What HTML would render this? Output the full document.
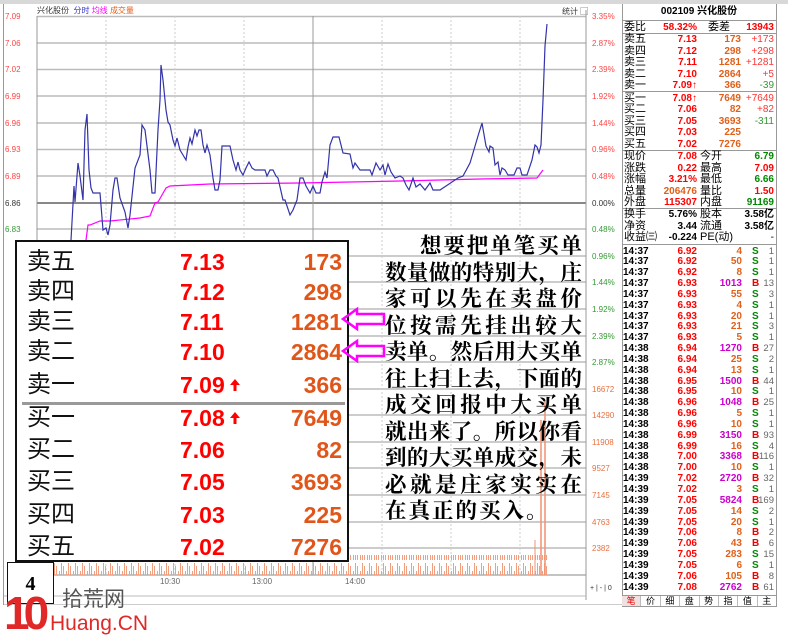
<!DOCTYPE html>
<html><head><meta charset="utf-8"><style>
*{margin:0;padding:0;box-sizing:border-box}
body{width:788px;height:641px;background:#fff;position:relative;overflow:hidden;font-family:"Liberation Sans","Noto Sans CJK SC",sans-serif}
.a{position:absolute}
.ax{position:absolute;font-size:8px;line-height:9px}
.r{position:absolute;left:622px;width:154px;height:11px;font-size:10px;line-height:11px;font-weight:bold}
.r span{position:absolute}
.l{left:2px;font-weight:normal;font-size:11px;line-height:11px;color:#000}
.p{right:79px;color:#f00}
.v{right:35px;color:#e0601a}
.c{right:2px;font-weight:normal;color:#f33}
.t{left:1px;color:#000}
.tp{right:79px;color:#f00}
.tv{right:34px;color:#e0601a}
.tb{left:130px}
.tn{right:2px;color:#666;font-weight:normal;font-size:9.5px}
.m{color:#c0c!important}
.B{color:#e00}.S{color:#080}
.bx{position:absolute;left:27px;width:320px;height:30px;font-size:24px;line-height:30px}
.bx span{position:absolute}
.bl{left:0;color:#111;font-family:"Liberation Sans","WenQuanYi Zen Hei",sans-serif}
.bp{left:153px;color:#f00;font-weight:bold;font-size:23px}
.bv{right:5px;color:#e0561a;font-weight:bold;font-size:23px}
.tx{position:absolute;left:385px;width:197px;font-family:"Liberation Serif","Noto Serif CJK SC",serif;font-weight:bold;font-size:21.5px;line-height:26.5px;text-align:justify;text-align-last:justify;white-space:nowrap;color:#000}
</style></head><body>
<div class="a" style="left:0;top:0;width:788px;height:4px;background:#d8d8d8"></div>
<div class="a" style="left:3px;top:4px;width:1px;height:601px;background:#999"></div>
<div class="a" style="left:37px;top:5px;font-size:8px;color:#333">兴化股份 <span style="color:#33c">&nbsp;分时</span> <span style="color:#f0f">均线</span> <span style="color:#e06020">成交量</span></div>
<div class="a" style="left:562px;top:6px;font-size:8px;color:#333">统计 ▢</div>

<svg class="a" style="left:0;top:0" width="622" height="605">
<g stroke="#bbb" stroke-width="1.4">
<line x1="37" y1="16.5" x2="586" y2="16.5"/><line x1="37" y1="43" x2="586" y2="43"/><line x1="37" y1="69.5" x2="586" y2="69.5"/><line x1="37" y1="96" x2="586" y2="96"/><line x1="37" y1="123" x2="586" y2="123"/><line x1="37" y1="149.5" x2="586" y2="149.5"/><line x1="37" y1="176" x2="586" y2="176"/>
<line x1="37" y1="229" x2="586" y2="229"/><line x1="37" y1="256" x2="586" y2="256"/><line x1="37" y1="282" x2="586" y2="282"/><line x1="37" y1="309" x2="586" y2="309"/><line x1="37" y1="336" x2="586" y2="336"/><line x1="37" y1="362" x2="586" y2="362"/><line x1="37" y1="389" x2="586" y2="389"/><line x1="37" y1="415" x2="586" y2="415"/><line x1="37" y1="442" x2="586" y2="442"/><line x1="37" y1="468" x2="586" y2="468"/><line x1="37" y1="495" x2="586" y2="495"/><line x1="37" y1="522" x2="586" y2="522"/><line x1="37" y1="548" x2="586" y2="548"/>
</g>
<line x1="37" y1="203" x2="586" y2="203" stroke="#888" stroke-width="2"/>
<line x1="37" y1="575" x2="586" y2="575" stroke="#888" stroke-width="1"/>
<g stroke="#ccc" stroke-dasharray="2,2"><line x1="106" y1="16" x2="106" y2="575"/><line x1="175" y1="16" x2="175" y2="575"/><line x1="244" y1="16" x2="244" y2="575"/><line x1="382" y1="16" x2="382" y2="575"/><line x1="451" y1="16" x2="451" y2="575"/><line x1="520" y1="16" x2="520" y2="575"/></g>
<line x1="313" y1="16" x2="313" y2="575" stroke="#999"/>
<line x1="37" y1="16" x2="37" y2="600" stroke="#999"/>
<line x1="586" y1="10" x2="586" y2="600" stroke="#999"/>
<rect x="37" y="555" width="510" height="20" fill="url(#vb)"/>
<defs><pattern id="vb" width="7" height="20" patternUnits="userSpaceOnUse"><rect x="0" y="6" width="1" height="14" fill="#f0a080"/><rect x="3" y="11" width="1" height="9" fill="#f0a080"/><rect x="5" y="3" width="1" height="17" fill="#f0a080"/></pattern></defs>
<line x1="541" y1="420" x2="541" y2="575" stroke="#f09070" stroke-width="1.5"/><line x1="545" y1="400" x2="545" y2="575" stroke="#f09070" stroke-width="1.5"/><line x1="535" y1="540" x2="535" y2="575" stroke="#f09070"/>
<polyline fill="none" stroke="#f0f" stroke-width="1.2" points="86,240 88,225 90,225 100,221 110,221 140,218 150,216 155,203 158,202 162,195 166,188 170,186 210,184 300,183 400,181 480,179 537,178 543,170"/>
<polyline fill="none" stroke="#33a" stroke-width="1.2" points="71,240 74,186 75,202 78,163 80,176 83,200 85,130 87,114 89,170 91,188 93,193 100,193 103,230 106,228 108,235 110,225 113,190 115,178 117,178 120,198 125,212 128,228 130,215 135,168 140,155 142,125 145,130 150,170 152,193 155,193 158,130 160,100 161,65 163,80 166,110 168,122 170,125 173,140 175,146 177,138 180,150 183,155 186,160 188,147 190,138 192,144 195,130 197,136 199,130 201,130 203,145 205,153 207,145 210,155 213,178 215,190 218,190 220,180 222,146 230,146 233,160 236,170 238,162 240,170 243,175 246,168 249,162 252,168 255,170 265,170 267,176 270,170 273,170 276,176 278,178 283,200 285,200 290,215 293,210 297,200 300,178 303,178 306,186 310,193 313,186 316,193 320,193 322,182 325,172 327,178 330,145 333,137 339,137 343,153 350,154 353,168 355,163 360,170 370,170 372,175 376,163 380,170 383,165 385,175 388,164 391,172 395,178 400,176 403,178 406,185 409,190 413,178 416,187 420,184 425,190 430,183 433,190 440,190 458,178 463,176 470,163 478,136 482,123 486,146 489,152 490,146 493,148 495,165 498,162 500,175 502,168 505,170 508,175 514,175 517,168 520,168 522,175 527,175 532,160 535,145 537,147 539,153 541,145 543,100 545,46 547,24"/>
<line x1="4" y1="596" x2="586" y2="596" stroke="#bbb"/>
<line x1="4" y1="605" x2="622" y2="605" stroke="#999"/>
</svg>

<div class="ax" style="left:5px;top:12px;color:#f44">7.09</div>
<div class="ax" style="left:5px;top:39px;color:#f44">7.06</div>
<div class="ax" style="left:5px;top:65px;color:#f44">7.02</div>
<div class="ax" style="left:5px;top:92px;color:#f44">6.99</div>
<div class="ax" style="left:5px;top:119px;color:#f44">6.96</div>
<div class="ax" style="left:5px;top:145px;color:#f44">6.93</div>
<div class="ax" style="left:5px;top:172px;color:#f44">6.89</div>
<div class="ax" style="left:5px;top:199px;color:#333">6.86</div>
<div class="ax" style="left:5px;top:225px;color:#393">6.83</div>

<div class="ax" style="left:592px;top:12px;color:#f44">3.35%</div>
<div class="ax" style="left:592px;top:39px;color:#f44">2.87%</div>
<div class="ax" style="left:592px;top:65px;color:#f44">2.39%</div>
<div class="ax" style="left:592px;top:92px;color:#f44">1.92%</div>
<div class="ax" style="left:592px;top:119px;color:#f44">1.44%</div>
<div class="ax" style="left:592px;top:145px;color:#f44">0.96%</div>
<div class="ax" style="left:592px;top:172px;color:#f44">0.48%</div>
<div class="ax" style="left:592px;top:199px;color:#333">0.00%</div>
<div class="ax" style="left:592px;top:225px;color:#393">0.48%</div>
<div class="ax" style="left:592px;top:252px;color:#393">0.96%</div>
<div class="ax" style="left:592px;top:278px;color:#393">1.44%</div>
<div class="ax" style="left:592px;top:305px;color:#393">1.92%</div>
<div class="ax" style="left:592px;top:332px;color:#393">2.39%</div>
<div class="ax" style="left:592px;top:358px;color:#393">2.87%</div>
<div class="ax" style="left:592px;top:385px;color:#e87040">16672</div>
<div class="ax" style="left:592px;top:411px;color:#e87040">14290</div>
<div class="ax" style="left:592px;top:438px;color:#e87040">11908</div>
<div class="ax" style="left:592px;top:464px;color:#e87040">9527</div>
<div class="ax" style="left:592px;top:491px;color:#e87040">7145</div>
<div class="ax" style="left:592px;top:518px;color:#e87040">4763</div>
<div class="ax" style="left:592px;top:544px;color:#e87040">2382</div>
<div class="ax" style="left:590px;top:584px;color:#333;font-size:7px">+ | - | 0</div>
<div class="ax" style="left:160px;top:577px;color:#666">10:30</div>
<div class="ax" style="left:252px;top:577px;color:#666">13:00</div>
<div class="ax" style="left:345px;top:577px;color:#666">14:00</div>

<!-- overlay box -->
<div class="a" style="left:15px;top:240px;width:334px;height:322px;background:#fff;border:2px solid #111"></div>
<div class="bx" style="top:247px"><span class="bl">卖五</span><span class="bp">7.13</span><span class="bv">173</span></div>
<div class="bx" style="top:277px"><span class="bl">卖四</span><span class="bp">7.12</span><span class="bv">298</span></div>
<div class="bx" style="top:307px"><span class="bl">卖三</span><span class="bp">7.11</span><span class="bv">1281</span></div>
<div class="bx" style="top:337px"><span class="bl">卖二</span><span class="bp">7.10</span><span class="bv">2864</span></div>
<div class="bx" style="top:370px"><span class="bl">卖一</span><span class="bp">7.09</span><span class="bv">366</span></div>
<svg class="a" style="left:229px;top:378px" width="12" height="14"><path d="M6 1 L11 7 H7.5 V13 H4.5 V7 H1 Z" fill="#f00"/></svg>
<div class="a" style="left:22px;top:402px;width:323px;height:3px;background:#999"></div>
<div class="bx" style="top:403px"><span class="bl">买一</span><span class="bp">7.08</span><span class="bv">7649</span></div>
<svg class="a" style="left:229px;top:411px" width="12" height="14"><path d="M6 1 L11 7 H7.5 V13 H4.5 V7 H1 Z" fill="#f00"/></svg>
<div class="bx" style="top:435px"><span class="bl">买二</span><span class="bp">7.06</span><span class="bv">82</span></div>
<div class="bx" style="top:467px"><span class="bl">买三</span><span class="bp">7.05</span><span class="bv">3693</span></div>
<div class="bx" style="top:500px"><span class="bl">买四</span><span class="bp">7.03</span><span class="bv">225</span></div>
<div class="bx" style="top:532px"><span class="bl">买五</span><span class="bp">7.02</span><span class="bv">7276</span></div>

<svg class="a" style="left:340px;top:305px" width="48" height="60">
<polygon points="3,14 17,4 17,9 44,9 44,19 17,19 17,24" fill="none" stroke="#f0f" stroke-width="2.5"/>
<polygon points="3,46 17,36 17,41 44,41 44,51 17,51 17,56" fill="none" stroke="#f0f" stroke-width="2.5"/>
</svg>

<div class="tx" style="top:233px;padding-left:35px">想要把单笔买单</div>
<div class="tx" style="top:259.5px">数量做的特别大，庄</div>
<div class="tx" style="top:286px">家可以先在卖盘价</div>
<div class="tx" style="top:312.5px">位按需先挂出较大</div>
<div class="tx" style="top:339px">卖单。然后用大买单</div>
<div class="tx" style="top:365.5px">往上扫上去，下面的</div>
<div class="tx" style="top:392px">成交回报中大买单</div>
<div class="tx" style="top:418.5px">就出来了。所以你看</div>
<div class="tx" style="top:445px">到的大买单成交，未</div>
<div class="tx" style="top:471.5px">必就是庄家实实在</div>
<div class="tx" style="top:498px;text-align-last:left;letter-spacing:2px">在真正的买入。</div>

<div class="a" style="left:7px;top:562px;width:47px;height:42px;background:#fff;border:1px solid #111;font:bold 20px 'Liberation Serif',serif;text-align:center;line-height:42px">4</div>

<!-- logo -->
<div class="a" style="left:4px;top:590px;font:bold 46px/46px 'Liberation Sans',sans-serif;color:#e02828;letter-spacing:-6px">10</div>
<div class="a" style="left:62px;top:588px;font-size:21px;line-height:24px;color:#555;font-family:'Liberation Sans','Noto Sans CJK SC',sans-serif">拾荒网</div>
<div class="a" style="left:50px;top:612px;font-size:21px;line-height:24px;color:#e02828">Huang.CN</div>

<!-- right panel -->
<div class="a" style="left:622px;top:4px;width:1px;height:603px;background:#999"></div>
<div class="a" style="left:776px;top:4px;width:1px;height:603px;background:#999"></div>
<div class="a" style="left:622px;top:5px;width:154px;text-align:center;font-size:10px;font-weight:bold;line-height:13px">002109 兴化股份</div>
<div class="a" style="left:622px;top:20px;width:154px;height:1px;background:#999"></div>
<div class="r" style="top:22px"><span class="l">委比</span><span class="p">58.32%</span><span class="l" style="left:86px">委差</span><span class="c" style="color:#f00;font-weight:bold">13943</span></div>
<div class="a" style="left:622px;top:33px;width:154px;height:1px;background:#999"></div>
<div class="r" style="top:34px"><span class="l">卖五</span><span class="p">7.13</span><span class="v">173</span><span class="c">+173</span></div>
<div class="r" style="top:45.5px"><span class="l">卖四</span><span class="p">7.12</span><span class="v">298</span><span class="c">+298</span></div>
<div class="r" style="top:57px"><span class="l">卖三</span><span class="p">7.11</span><span class="v">1281</span><span class="c">+1281</span></div>
<div class="r" style="top:68.5px"><span class="l">卖二</span><span class="p">7.10</span><span class="v">2864</span><span class="c">+5</span></div>
<div class="r" style="top:80px"><span class="l">卖一</span><span class="p">7.09↑</span><span class="v">366</span><span class="c" style="color:#393">-39</span></div>
<div class="a" style="left:622px;top:91px;width:154px;height:1px;background:#999"></div>
<div class="r" style="top:92.5px"><span class="l">买一</span><span class="p">7.08↑</span><span class="v">7649</span><span class="c">+7649</span></div>
<div class="r" style="top:104px"><span class="l">买二</span><span class="p">7.06</span><span class="v">82</span><span class="c">+82</span></div>
<div class="r" style="top:115.5px"><span class="l">买三</span><span class="p">7.05</span><span class="v">3693</span><span class="c" style="color:#393">-311</span></div>
<div class="r" style="top:127px"><span class="l">买四</span><span class="p">7.03</span><span class="v">225</span></div>
<div class="r" style="top:138.5px"><span class="l">买五</span><span class="p">7.02</span><span class="v">7276</span></div>
<div class="a" style="left:622px;top:150px;width:154px;height:1px;background:#999"></div>
<div class="r" style="top:151px"><span class="l">现价</span><span class="p">7.08</span><span class="l" style="left:78px">今开</span><span class="c" style="color:#080;font-weight:bold">6.79</span></div>
<div class="r" style="top:162.5px"><span class="l">涨跌</span><span class="p">0.22</span><span class="l" style="left:78px">最高</span><span class="c" style="color:#f00;font-weight:bold">7.09</span></div>
<div class="r" style="top:174px"><span class="l">涨幅</span><span class="p">3.21%</span><span class="l" style="left:78px">最低</span><span class="c" style="color:#080;font-weight:bold">6.66</span></div>
<div class="r" style="top:185.5px"><span class="l">总量</span><span class="p" style="color:#e0601a">206476</span><span class="l" style="left:78px">量比</span><span class="c" style="color:#f00;font-weight:bold">1.50</span></div>
<div class="r" style="top:197px"><span class="l">外盘</span><span class="p">115307</span><span class="l" style="left:78px">内盘</span><span class="c" style="color:#080;font-weight:bold">91169</span></div>
<div class="a" style="left:622px;top:208px;width:154px;height:1px;background:#999"></div>
<div class="r" style="top:209px"><span class="l">换手</span><span class="p" style="color:#000">5.76%</span><span class="l" style="left:78px">股本</span><span class="c" style="color:#000;font-weight:bold">3.58亿</span></div>
<div class="r" style="top:220.5px"><span class="l">净资</span><span class="p" style="color:#000">3.44</span><span class="l" style="left:78px">流通</span><span class="c" style="color:#000;font-weight:bold">3.58亿</span></div>
<div class="r" style="top:232px"><span class="l">收益㈢</span><span class="p" style="color:#000">-0.224</span><span class="l" style="left:78px">PE(动)</span><span class="c" style="color:#000">-</span></div>
<div class="a" style="left:622px;top:244px;width:154px;height:1px;background:#999"></div>

<div class="r" style="top:245.5px"><span class="t">14:37</span><span class="tp">6.92</span><span class="tv">4</span><span class="tb S">S</span><span class="tn">1</span></div>
<div class="r" style="top:256.3px"><span class="t">14:37</span><span class="tp">6.92</span><span class="tv">50</span><span class="tb S">S</span><span class="tn">1</span></div>
<div class="r" style="top:267.2px"><span class="t">14:37</span><span class="tp">6.92</span><span class="tv">8</span><span class="tb S">S</span><span class="tn">1</span></div>
<div class="r" style="top:278px"><span class="t">14:37</span><span class="tp">6.93</span><span class="tv m">1013</span><span class="tb B">B</span><span class="tn">13</span></div>
<div class="r" style="top:288.9px"><span class="t">14:37</span><span class="tp">6.93</span><span class="tv">55</span><span class="tb S">S</span><span class="tn">3</span></div>
<div class="r" style="top:299.7px"><span class="t">14:37</span><span class="tp">6.93</span><span class="tv">4</span><span class="tb S">S</span><span class="tn">1</span></div>
<div class="r" style="top:310.5px"><span class="t">14:37</span><span class="tp">6.93</span><span class="tv">20</span><span class="tb S">S</span><span class="tn">1</span></div>
<div class="r" style="top:321.4px"><span class="t">14:37</span><span class="tp">6.93</span><span class="tv">21</span><span class="tb S">S</span><span class="tn">3</span></div>
<div class="r" style="top:332.2px"><span class="t">14:37</span><span class="tp">6.93</span><span class="tv">5</span><span class="tb S">S</span><span class="tn">1</span></div>
<div class="r" style="top:343px"><span class="t">14:38</span><span class="tp">6.94</span><span class="tv m">1270</span><span class="tb B">B</span><span class="tn">27</span></div>
<div class="r" style="top:353.9px"><span class="t">14:38</span><span class="tp">6.94</span><span class="tv">25</span><span class="tb S">S</span><span class="tn">2</span></div>
<div class="r" style="top:364.7px"><span class="t">14:38</span><span class="tp">6.94</span><span class="tv">13</span><span class="tb S">S</span><span class="tn">1</span></div>
<div class="r" style="top:375.6px"><span class="t">14:38</span><span class="tp">6.95</span><span class="tv m">1500</span><span class="tb B">B</span><span class="tn">44</span></div>
<div class="r" style="top:386.4px"><span class="t">14:38</span><span class="tp">6.95</span><span class="tv">10</span><span class="tb S">S</span><span class="tn">1</span></div>
<div class="r" style="top:397.2px"><span class="t">14:38</span><span class="tp">6.96</span><span class="tv m">1048</span><span class="tb B">B</span><span class="tn">25</span></div>
<div class="r" style="top:408.1px"><span class="t">14:38</span><span class="tp">6.96</span><span class="tv">5</span><span class="tb S">S</span><span class="tn">1</span></div>
<div class="r" style="top:418.9px"><span class="t">14:38</span><span class="tp">6.96</span><span class="tv">10</span><span class="tb S">S</span><span class="tn">1</span></div>
<div class="r" style="top:429.8px"><span class="t">14:38</span><span class="tp">6.99</span><span class="tv m">3150</span><span class="tb B">B</span><span class="tn">93</span></div>
<div class="r" style="top:440.6px"><span class="t">14:38</span><span class="tp">6.99</span><span class="tv">16</span><span class="tb S">S</span><span class="tn">4</span></div>
<div class="r" style="top:451.4px"><span class="t">14:38</span><span class="tp">7.00</span><span class="tv m">3368</span><span class="tb B">B</span><span class="tn">116</span></div>
<div class="r" style="top:462.3px"><span class="t">14:38</span><span class="tp">7.00</span><span class="tv">10</span><span class="tb S">S</span><span class="tn">1</span></div>
<div class="r" style="top:473.1px"><span class="t">14:39</span><span class="tp">7.02</span><span class="tv m">2720</span><span class="tb B">B</span><span class="tn">32</span></div>
<div class="r" style="top:484px"><span class="t">14:39</span><span class="tp">7.02</span><span class="tv">3</span><span class="tb S">S</span><span class="tn">1</span></div>
<div class="r" style="top:494.8px"><span class="t">14:39</span><span class="tp">7.05</span><span class="tv m">5824</span><span class="tb B">B</span><span class="tn">169</span></div>
<div class="r" style="top:505.6px"><span class="t">14:39</span><span class="tp">7.05</span><span class="tv">14</span><span class="tb S">S</span><span class="tn">2</span></div>
<div class="r" style="top:516.5px"><span class="t">14:39</span><span class="tp">7.05</span><span class="tv">20</span><span class="tb S">S</span><span class="tn">1</span></div>
<div class="r" style="top:527.3px"><span class="t">14:39</span><span class="tp">7.06</span><span class="tv">8</span><span class="tb B">B</span><span class="tn">2</span></div>
<div class="r" style="top:538.2px"><span class="t">14:39</span><span class="tp">7.06</span><span class="tv">43</span><span class="tb B">B</span><span class="tn">6</span></div>
<div class="r" style="top:549px"><span class="t">14:39</span><span class="tp">7.05</span><span class="tv">283</span><span class="tb S">S</span><span class="tn">15</span></div>
<div class="r" style="top:559.8px"><span class="t">14:39</span><span class="tp">7.05</span><span class="tv">6</span><span class="tb S">S</span><span class="tn">1</span></div>
<div class="r" style="top:570.7px"><span class="t">14:39</span><span class="tp">7.06</span><span class="tv">105</span><span class="tb B">B</span><span class="tn">8</span></div>
<div class="r" style="top:581.5px"><span class="t">14:39</span><span class="tp">7.08</span><span class="tv m">2762</span><span class="tb B">B</span><span class="tn">61</span></div>
<div class="a" style="left:622px;top:595px;width:154px;height:12px;border-top:1px solid #999;border-bottom:1px solid #999;display:flex;font-size:9px;line-height:10px;text-align:center">
<span style="flex:1;color:#e00;background:#f0e0e0;border-right:1px solid #bbb">笔</span><span style="flex:1;border-right:1px solid #bbb">价</span><span style="flex:1;border-right:1px solid #bbb">细</span><span style="flex:1;border-right:1px solid #bbb">盘</span><span style="flex:1;border-right:1px solid #bbb">势</span><span style="flex:1;border-right:1px solid #bbb">指</span><span style="flex:1;border-right:1px solid #bbb">值</span><span style="flex:1">主</span></div>
</body></html>
